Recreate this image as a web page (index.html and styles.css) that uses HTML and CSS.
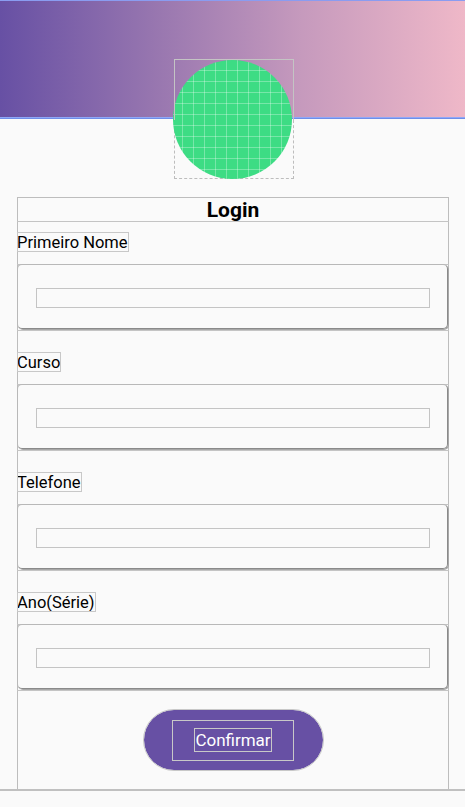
FILE: index.html
```html
<!DOCTYPE html>
<html lang="pt">
<head>
<meta charset="utf-8">
<title>Login</title>
<link rel="stylesheet" href="styles.css">
</head>
<body>
<header class="hero"></header>
<div class="avatar-box">
  <div class="avatar"></div>
</div>
<main class="form">
  <div class="title-row"><h1 class="title">Login</h1></div>
  <section class="group first">
    <span class="label">Primeiro Nome</span>
    <div class="field-box"><div class="card"><div class="input"></div></div></div>
  </section>
  <section class="group">
    <span class="label">Curso</span>
    <div class="field-box"><div class="card"><div class="input"></div></div></div>
  </section>
  <section class="group">
    <span class="label">Telefone</span>
    <div class="field-box"><div class="card"><div class="input"></div></div></div>
  </section>
  <section class="group">
    <span class="label">Ano(Série)</span>
    <div class="field-box"><div class="card"><div class="input"></div></div></div>
  </section>
  <div class="actions">
    <button class="btn"><span class="btn-inner"><span class="btn-text">Confirmar</span></span></button>
  </div>
</main>
<div class="bottom-line"></div>
</body>
</html>
```

FILE: styles.css
```css
html, body {
  margin: 0;
  padding: 0;
  background: #fafafa;
  font-family: Roboto, "Liberation Sans", sans-serif;
  color: #111;
}

.hero {
  height: 118px;
  background: linear-gradient(90deg, #6750a4 0%, #9a78b0 35%, #c69abd 65%, #efb8c8 100%);
  border-top: 1px solid #8a9cf0;
  box-sizing: border-box;
  border-bottom: 1px solid #8fa8f8;
  box-shadow: 0 1px 0 #6f8ee8;
}

.avatar-box {
  position: relative;
  width: 120px;
  height: 120px;
  margin: -59px 0 0 174px;
  box-sizing: border-box;
  border: 1px dashed #bdbdbd;
  display: flex;
  align-items: center;
  justify-content: center;
}

.avatar-box::before {
  content: "";
  position: absolute;
  left: -1px;
  right: -1px;
  top: -1px;
  height: 60px;
  border: 1px solid #c4c4c4;
  border-bottom: none;
  z-index: 2;
}

.avatar {
  width: 119px;
  height: 119px;
  margin-left: -3px;
  border-radius: 50%;
  background-color: #3ddc84;
  background-image:
    repeating-linear-gradient(90deg, transparent 0 9px, rgba(255,255,255,0.3) 9px 10px, transparent 10px 11px),
    repeating-linear-gradient(0deg, transparent 0 9px, rgba(255,255,255,0.3) 9px 10px, transparent 10px 11px);
  position: relative;
  z-index: 1;
}

.form {
  margin: 18px 16px 0 17px;
  box-shadow: inset 1px 0 0 #bdbdbd, inset -1px 0 0 #bdbdbd, inset 0 1px 0 #bdbdbd;
  padding-bottom: 19px;
}

.title-row {
  height: 25px;
  box-sizing: border-box;
  border-bottom: 1px solid #c4c4c4;
  display: flex;
  align-items: center;
  justify-content: center;
  padding-top: 1px;
}

.title {
  margin: 0;
  font-size: 21px;
  font-weight: 700;
  line-height: 24px;
  color: #000;
}

.group {
  display: flex;
  flex-direction: column;
  align-items: flex-start;
  padding-top: 21px;
}

.group.first {
  padding-top: 10px;
}

.label {
  display: inline-block;
  height: 20px;
  line-height: 21px;
  font-size: 16.5px;
  color: #000;
  outline: 1px solid #c8c8c8;
  outline-offset: -1px;
  padding-right: 1px;
}

.field-box {
  align-self: stretch;
  margin-top: 12px;
  height: 67px;
  box-sizing: border-box;
  border-top: 1px solid #c4c4c4;
  border-bottom: 1px solid #c4c4c4;
}

.card {
  margin: -1px 1px 0 0;
  height: 65px;
  border: 1px solid #b8b8b8;
  border-right-color: #8a8a8a;
  border-bottom-color: #8a8a8a;
  border-radius: 5px;
  box-shadow: 1px 1px 0 #a8a8a8;
  padding: 23px 17px 0 18px;
  box-sizing: border-box;
}

.input {
  height: 20px;
  box-sizing: border-box;
  border: 1px solid #c4c4c4;
}

.actions {
  display: flex;
  justify-content: center;
  padding-top: 19px;
}

.btn {
  width: 179px;
  height: 60px;
  border: none;
  border-radius: 30px;
  background: #6750a4;
  outline: 1px solid #c8c8c8;
  padding: 0;
  display: flex;
  align-items: center;
  justify-content: center;
  font-family: inherit;
  cursor: pointer;
}

.btn-inner {
  width: 122px;
  height: 41px;
  box-sizing: border-box;
  border: 1px solid #c8c8c8;
  display: flex;
  align-items: center;
  justify-content: center;
}

.btn-text {
  color: #fff;
  font-size: 17px;
  line-height: 22px;
  border: 1px solid #c8c8c8;
  padding: 0;
}

.bottom-line {
  border-top: 2px solid #c0c0c0;
  height: 40px;
}
```
